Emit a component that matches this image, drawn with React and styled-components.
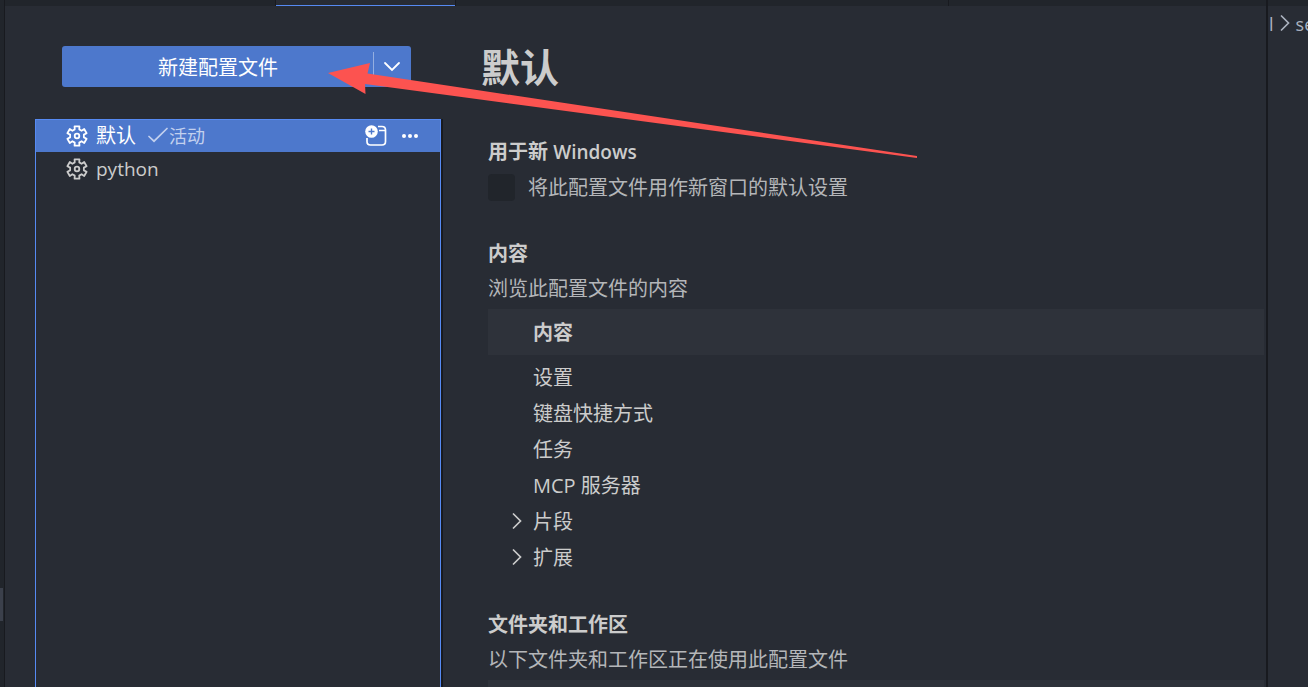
import React, { useState } from "react";
import styled, { createGlobalStyle } from 'styled-components';

const GlobalStyle = createGlobalStyle`
   * {
      box-sizing: border-box;
   }

   body {
      margin: 0;
      overflow: hidden;
      background-color: #282c34;
      color: #cccccc;
      font-family: 'Open Sans', 'Noto Sans CJK SC', sans-serif;
      font-size: 20px;
      line-height: 32px;
   }

   button {
      padding: 0;
      border: 0;
      background: none;
      color: inherit;
      font: inherit;
      cursor: pointer;
   }

   svg {
      display: block;
      flex: none;
   }
`;

const Window = styled.div`
   display: grid;
   grid-template-columns: 5px minmax(0, 1fr) 42px;
   height: 100vh;
   overflow: hidden;
`;

const SideStrip = styled.aside`
   display: flex;
   flex-direction: column;
   justify-content: flex-end;
   padding-bottom: 66px;
   background-color: #21252b;
   border-right: 1px solid #181a1f;
`;

const ScrollThumb = styled.div`
   width: 3px;
   height: 33px;
   background-color: #3b404b;
`;

const Center = styled.div`
   display: flex;
   flex-direction: column;
   min-height: 0;
`;

const TabBar = styled.div`
   display: flex;
   flex: none;
   height: 6px;
   padding-left: 270px;
   background-color: #21252b;
`;

const Tab = styled.div`
   width: ${({ $active }) => $active ? '181px' : '493px'};
   border-left: ${({ $active }) => $active ? '1px solid #181a1f' : '0'};
   border-right: 1px solid #181a1f;
   background-color: ${({ $active }) => $active ? '#282c34' : 'transparent'};
   box-shadow: ${({ $active }) => $active ? 'inset 0 -1px #568af2' : 'none'};
`;

const Editor = styled.main`
   display: grid;
   grid-template-columns: 408px minmax(0, 1fr);
   column-gap: 38px;
   flex: 1;
   min-height: 0;
   padding-left: 30px;
`;

const Sidebar = styled.section`
   display: flex;
   flex-direction: column;
   padding-top: 40px;
`;

const SplitButton = styled.div`
   display: flex;
   align-items: stretch;
   flex: none;
   height: 41px;
   margin: 0 32px 32px 27px;
   border-radius: 3px;
   background-color: #4d78cc;
   color: #ffffff;
`;

const CreateButton = styled.button`
   flex: 1;
   padding: 2px 0 0 1px;
`;

const Divider = styled.span`
   width: 1px;
   margin: 6px 0;
   background-color: #94aee0;
`;

const DropButton = styled.button`
   display: grid;
   place-items: center;
   width: 37px;
   padding-right: 2px;
`;

const ProfileList = styled.ul`
   flex: 1;
   margin: 0 2px -1px 0;
   padding: 0;
   list-style: none;
   outline: 1px solid #568af2;
   outline-offset: -1px;
   box-shadow: 2px 0 #181a1f;
`;

const ProfileRow = styled.li`
   display: flex;
   align-items: center;
   height: 33px;
   padding: 0 22px 0 31px;
   background-color: ${({ $selected }) => $selected ? '#4d78cc' : 'transparent'};
   color: ${({ $selected }) => $selected ? '#ffffff' : '#cccccc'};
`;

const ProfileName = styled.span`
   margin-left: 8px;
`;

const ActiveMark = styled.span`
   display: flex;
   align-items: center;
   margin-left: 12px;
   color: #c2d0ee;
   font-size: 18px;
`;

const Actions = styled.div`
   display: flex;
   align-items: center;
   gap: 14px;
   margin-left: auto;
`;

const Details = styled.section`
   padding: 36px 2px 0 0;
`;

const Title = styled.h1`
   margin: 0 0 44px;
   font-size: 39px;
   font-weight: 700;
   line-height: 50px;
`;

const Section = styled.section`
   margin: 0 0 34px 7px;
`;

const SectionTitle = styled.h2`
   margin: 0 0 3px;
   font-size: 20px;
   font-weight: 600;
   line-height: 32px;
`;

const Latin = styled.span`
   font-size: 19px;
`;

const Description = styled.p`
   margin: 0 0 4px;
   color: #b4b6b9;
`;

const CheckLabel = styled.label`
   display: flex;
   align-items: center;
   gap: 13px;
   height: 33px;
   color: #b4b6b9;
`;

const CheckBox = styled.input`
   appearance: none;
   width: 27px;
   height: 27px;
   margin: 0;
   border-radius: 4px;
   background-color: #21252b;

   &:checked {
      background-color: #4d78cc;
   }
`;

const Table = styled.table`
   width: 100%;
   border-collapse: collapse;
`;

const HeadCell = styled.th`
   height: 46px;
   padding: 2px 0 0 45px;
   background-color: #2e323a;
   font-weight: 700;
   text-align: left;
`;

const Body = styled.tbody`
   &::before {
      content: '';
      display: block;
      height: 4px;
   }
`;

const Cell = styled.td`
   height: 36px;
   padding: 2px 0 0;
`;

const CellInner = styled.div`
   display: flex;
   align-items: center;
   padding-left: ${({ $leaf }) => $leaf ? '45px' : '23px'};
`;

const Twistie = styled.button`
   width: 22px;
`;

const NextGroup = styled.aside`
   padding-left: 1px;
   border-left: 2px solid #181a1f;
   overflow: hidden;
`;

const NextTabs = styled.div`
   height: 6px;
   margin-left: -1px;
   background-color: #21252b;
`;

const Breadcrumb = styled.nav`
   display: flex;
   align-items: center;
   gap: 5px;
   height: 36px;
   color: #abb2bf;
   font-size: 18px;
   white-space: nowrap;
`;

const Pointer = styled.svg`
   position: absolute;
   top: 0;
   left: 0;
   pointer-events: none;
`;

// six teeth, each one is two inner and two outer corners
const gearPoints = [0, 60, 120, 180, 240, 300].flatMap((tooth) =>
   [[-19, 7], [-14, 10], [14, 10], [19, 7]].map(([turn, radius]) => {
      const angle = (tooth + turn) * Math.PI / 180;
      return `${(11 + radius * Math.sin(angle)).toFixed(2)},${(11 - radius * Math.cos(angle)).toFixed(2)}`;
   })
).join(' ');

const GearIcon = () => (
   <svg width="22" height="22" viewBox="0 0 22 22" fill="none" stroke="currentColor" strokeWidth="1.8" strokeLinejoin="round">
      <polygon points={gearPoints}/>
      <circle cx="11" cy="11" r="2.3"/>
   </svg>
);

const CheckIcon = () => (
   <svg width="21" height="20" viewBox="0 0 21 20" fill="none" stroke="currentColor" strokeWidth="1.7" strokeLinecap="round">
      <path d="M1 10.500L6 15.200L19 2.500"/>
   </svg>
);

const ChevronDown = () => (
   <svg width="18" height="18" viewBox="0 0 18 18" fill="none" stroke="currentColor" strokeWidth="1.8" strokeLinecap="round">
      <path d="M2 5L9 12L16 5"/>
   </svg>
);

const ChevronRight = () => (
   <svg width="12" height="18" viewBox="0 0 12 18" fill="none" stroke="currentColor" strokeWidth="1.7" strokeLinecap="round">
      <path d="M2.500 1L9.500 8L2.500 15"/>
   </svg>
);

const NewWindowIcon = () => (
   <svg width="22" height="22" viewBox="0 0 22 22" fill="none">
      <path d="M13 1.500H17Q20.500 1.500 20.500 5V16.500Q20.500 20 17 20H5.500Q2 20 2 16.500V13M14 5.500H20.500" stroke="currentColor" strokeWidth="1.7"/>
      <circle cx="6.500" cy="6.500" r="6.300" fill="currentColor"/>
      <path d="M3.500 6.500H9.500M6.500 3.500V9.500" stroke="#4d78cc" strokeWidth="1.400"/>
   </svg>
);

const MoreIcon = () => (
   <svg width="18" height="18" viewBox="0 0 18 18" fill="currentColor">
      <circle cx="3" cy="9" r="2"/>
      <circle cx="9" cy="9" r="2"/>
      <circle cx="15" cy="9" r="2"/>
   </svg>
);

const resources = [
   { name: '设置' },
   { name: '键盘快捷方式' },
   { name: '任务' },
   { name: 'MCP 服务器' },
   { name: '片段', group: true },
   { name: '扩展', group: true },
];

export default function App() {

   const [useForNew, setUseForNew] = useState(false);

   return (
      <>
         <GlobalStyle/>
         <Window>
            <SideStrip>
               <ScrollThumb/>
            </SideStrip>
            <Center>
               <TabBar>
                  <Tab $active/>
                  <Tab/>
               </TabBar>
               <Editor>
                  <Sidebar>
                     <SplitButton>
                        <CreateButton>新建配置文件</CreateButton>
                        <Divider/>
                        <DropButton aria-label="更多">
                           <ChevronDown/>
                        </DropButton>
                     </SplitButton>
                     <ProfileList>
                        <ProfileRow $selected>
                           <GearIcon/>
                           <ProfileName>默认</ProfileName>
                           <ActiveMark>
                              <CheckIcon/>
                              活动
                           </ActiveMark>
                           <Actions>
                              <button><NewWindowIcon/></button>
                              <button><MoreIcon/></button>
                           </Actions>
                        </ProfileRow>
                        <ProfileRow>
                           <GearIcon/>
                           <ProfileName><Latin>python</Latin></ProfileName>
                        </ProfileRow>
                     </ProfileList>
                  </Sidebar>
                  <Details>
                     <Title>默认</Title>
                     <Section>
                        <SectionTitle>用于新 <Latin>Windows</Latin></SectionTitle>
                        <CheckLabel>
                           <CheckBox
                              type="checkbox"
                              checked={useForNew}
                              onChange={(e) => setUseForNew(e.target.checked)}
                           />
                           将此配置文件用作新窗口的默认设置
                        </CheckLabel>
                     </Section>
                     <Section>
                        <SectionTitle>内容</SectionTitle>
                        <Description>浏览此配置文件的内容</Description>
                        <Table>
                           <thead>
                              <tr><HeadCell>内容</HeadCell></tr>
                           </thead>
                           <Body>
                              {resources.map(({ name, group }) => (
                                 <tr key={name}>
                                    <Cell>
                                       <CellInner $leaf={!group}>
                                          {group && <Twistie><ChevronRight/></Twistie>}
                                          {name}
                                       </CellInner>
                                    </Cell>
                                 </tr>
                              ))}
                           </Body>
                        </Table>
                     </Section>
                     <Section>
                        <SectionTitle>文件夹和工作区</SectionTitle>
                        <Description>以下文件夹和工作区正在使用此配置文件</Description>
                        <Table>
                           <thead>
                              <tr><HeadCell/></tr>
                           </thead>
                        </Table>
                     </Section>
                  </Details>
               </Editor>
            </Center>
            <NextGroup>
               <NextTabs/>
               <Breadcrumb>
                  <span>l</span>
                  <ChevronRight/>
                  <span>se</span>
               </Breadcrumb>
            </NextGroup>
         </Window>
         <Pointer width="920" height="160" viewBox="0 0 920 160">
            <polygon points="328,73 370,63 367.5,73.5 917,156 917,158 365,84 365.5,94" fill="#fc5350"/>
         </Pointer>
      </>
   )

}
